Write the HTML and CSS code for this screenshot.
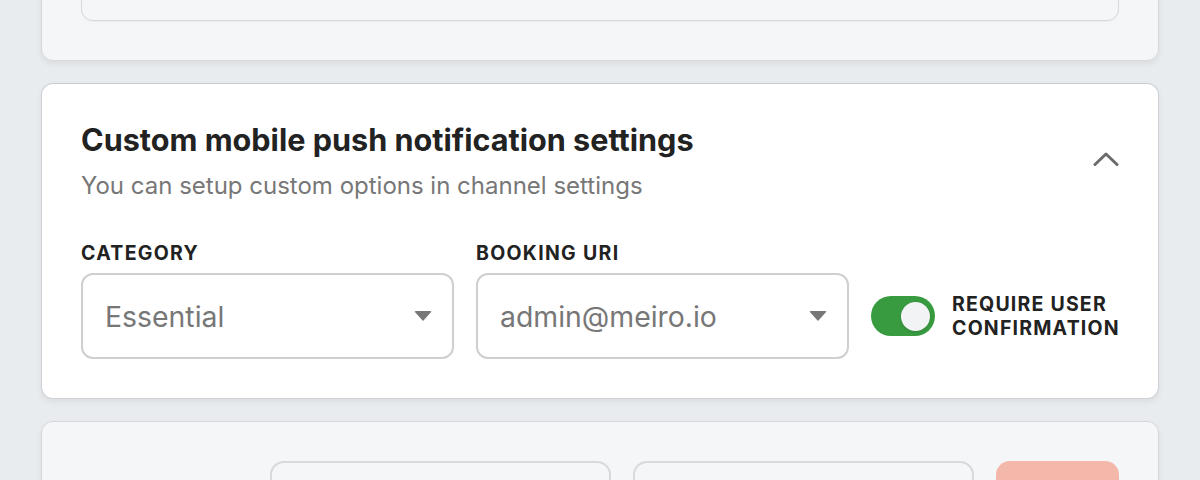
FILE: index.html
```html
<!DOCTYPE html>
<html lang="en">
<head>
<meta charset="utf-8">
<title>Push settings</title>
<link rel="stylesheet" href="styles.css">
</head>
<body>
<div class="page">
  <section class="card card-muted card-first">
    <div class="inner-box inner-box-tall"></div>
  </section>

  <section class="card card-active">
    <div class="card-header">
      <div class="header-text">
        <h2 class="title">Custom mobile push notification settings</h2>
        <p class="subtitle">You can setup custom options in channel settings</p>
      </div>
      <button class="collapse-btn" aria-label="Collapse">
        <svg width="26" height="16" viewBox="0 0 26 16" fill="none"><path d="M2 13.5 L13 3 L24 13.5" stroke="#6b6b6b" stroke-width="3" stroke-linecap="round" stroke-linejoin="round"/></svg>
      </button>
    </div>

    <div class="fields">
      <div class="field">
        <div class="label">CATEGORY</div>
        <div class="select">
          <span class="select-value">Essential</span>
          <span class="caret"></span>
        </div>
      </div>
      <div class="field">
        <div class="label">BOOKING URI</div>
        <div class="select">
          <span class="select-value">admin@meiro.io</span>
          <span class="caret"></span>
        </div>
      </div>
      <div class="toggle-group">
        <span class="toggle"><span class="knob"></span></span>
        <span class="toggle-label">REQUIRE USER<br>CONFIRMATION</span>
      </div>
    </div>
  </section>

  <section class="card card-muted card-last">
    <div class="last-row">
      <div class="ghost-box"></div>
      <div class="ghost-box"></div>
      <div class="ghost-btn"></div>
    </div>
  </section>
</div>
</body>
</html>
```

FILE: styles.css
```css
* { box-sizing: border-box; }

html, body {
  margin: 0;
  padding: 0;
  height: 100%;
  overflow: hidden;
}

body {
  background: #e9ecef;
  font-family: Inter, "Noto Sans", "Liberation Sans", sans-serif;
  color: #222;
}

.page {
  padding: 0 41px;
  display: flex;
  flex-direction: column;
  gap: 22px;
}

.card {
  border-radius: 12px;
  border: 1px solid #d6d8db;
  box-shadow: 0 3px 6px rgba(0, 0, 0, 0.06);
  padding: 39px 39px;
}

.card-muted {
  background: #f5f6f8;
}

.card-first {
  margin-top: -121px;
  height: 182px;
}

.inner-box {
  border: 1px solid #d8d9dc;
  border-radius: 12px;
  background: #f5f6f8;
  box-shadow: 0 1px 1px rgba(0, 0, 0, 0.04);
}

.inner-box-tall {
  height: 102px;
}

.card-active {
  background: #fff;
  border-color: #cfd1d4;
  border-top-color: #c9cbce;
  height: 316px;
}

.card-header {
  display: flex;
  align-items: center;
  justify-content: space-between;
}

.title {
  margin: 0;
  font-size: 30.6px;
  line-height: 34px;
  font-weight: 700;
  color: #222;
}

.subtitle {
  margin: 15px 0 0;
  font-size: 24px;
  line-height: 28px;
  color: #777;
}

.collapse-btn {
  border: 0;
  background: none;
  padding: 0;
  margin: 0 0 6px;
  width: 26px;
  height: 16px;
  display: flex;
}

.fields {
  display: flex;
  align-items: flex-end;
  gap: 22px;
  margin-top: 43px;
}

.field {
  width: 373px;
  flex-shrink: 0;
  display: flex;
  flex-direction: column;
  gap: 10px;
}

.label {
  font-size: 19.5px;
  line-height: 20px;
  font-weight: 700;
  letter-spacing: 1.3px;
  color: #222;
}

.select {
  height: 86px;
  border: 2px solid #cfcfcf;
  border-radius: 12px;
  display: flex;
  align-items: center;
  justify-content: space-between;
  padding: 0 20px 0 22px;
}

.select-value {
  font-size: 28.4px;
  color: #777;
}

.caret {
  width: 0;
  height: 0;
  border-left: 9px solid transparent;
  border-right: 9px solid transparent;
  border-top: 10px solid #777;
  border-radius: 2px;
}

.toggle-group {
  display: flex;
  align-items: center;
  gap: 17px;
  height: 86px;
  min-width: 0;
}

.toggle {
  width: 64px;
  height: 40px;
  border-radius: 20px;
  background: #389b40;
  display: flex;
  align-items: center;
  justify-content: flex-end;
  padding: 0 5px;
  flex-shrink: 0;
}

.knob {
  width: 29px;
  height: 29px;
  border-radius: 50%;
  background: #f2f3f5;
  box-shadow: 0 1px 3px rgba(0, 0, 0, 0.15);
}

.toggle-label {
  font-size: 19.5px;
  line-height: 24px;
  font-weight: 700;
  letter-spacing: 1.2px;
  color: #222;
  white-space: nowrap;
}

.card-last {
  height: 200px;
}

.last-row {
  display: flex;
  justify-content: flex-end;
  gap: 22px;
}

.ghost-box {
  width: 341px;
  height: 80px;
  border: 2px solid #d8d9dc;
  border-radius: 14px;
  background: #f5f6f8;
}

.ghost-btn {
  width: 123px;
  height: 80px;
  border-radius: 14px;
  background: #f4b8ab;
}
```
